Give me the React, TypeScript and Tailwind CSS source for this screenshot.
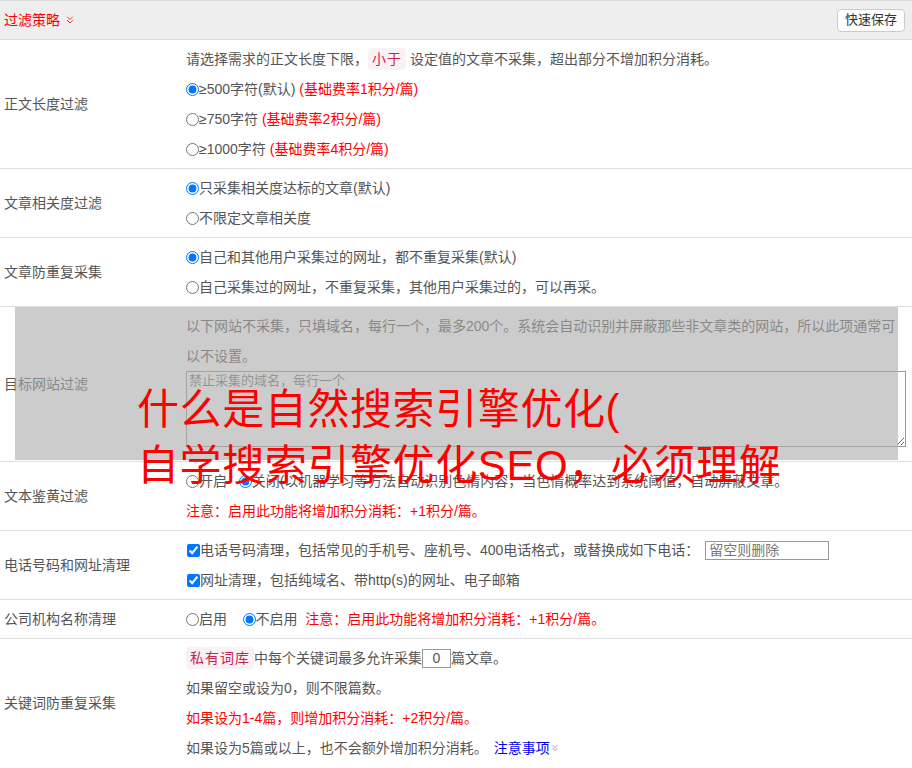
import { ChevronsDown } from 'lucide-react';
import type { ReactNode } from 'react';

function Row({ label, children, last }: { label: string; children: ReactNode; last?: boolean }) {
  return (
    <div className={`flex ${last ? '' : 'border-b border-[#dddddd]'}`}>
      <div className="flex w-[186px] shrink-0 items-center pl-[4px]">{label}</div>
      <div className="flex-1 py-[4px]">{children}</div>
    </div>
  );
}

function Line({ children }: { children: ReactNode }) {
  return <div className="flex h-[30px] items-center whitespace-nowrap">{children}</div>;
}

function Radio({ checked, name }: { checked?: boolean; name: string }) {
  return <input type="radio" name={name} defaultChecked={checked} className="m-0 h-[13px] w-[13px]" />;
}

function Check() {
  return <input type="checkbox" defaultChecked className="m-0 ml-[1px] h-[13px] w-[13px]" />;
}

function Code({ children }: { children: ReactNode }) {
  return (
    <span className="rounded-[4px] bg-[#f9f2f4] px-[4px] leading-[22px] text-[#c7254e] tracking-[1px]">
      {children}
    </span>
  );
}

const red = 'text-[#ff0000]';

export default function App() {
  return (
    <div className="relative w-[912px] bg-white font-['Liberation_Sans','Noto_Sans_CJK_SC',sans-serif] text-[14px] text-[#555555]">
      {/* header */}
      <div className="flex h-[40px] items-center justify-between border-y border-[#dddddd] bg-[#eeeeee] pl-[4px] pr-[7px]">
        <div className="flex items-center gap-[4px] text-[#ff0000]">
          过滤策略
          <ChevronsDown className="h-[12px] w-[12px]" strokeWidth={1.6} />
        </div>
        <button className="h-[23px] w-[68px] rounded-[4px] border border-[#cccccc] bg-white text-[13px] text-[#333333]">
          快速保存
        </button>
      </div>

      <Row label="正文长度过滤">
        <Line>
          请选择需求的正文长度下限，
          <Code>小于</Code>
          &nbsp;设定值的文章不采集，超出部分不增加积分消耗。
        </Line>
        <Line>
          <Radio name="len" checked />
          ≥500字符(默认)&nbsp;<span className={red}>(基础费率1积分/篇)</span>
        </Line>
        <Line>
          <Radio name="len" />
          ≥750字符&nbsp;<span className={red}>(基础费率2积分/篇)</span>
        </Line>
        <Line>
          <Radio name="len" />
          ≥1000字符&nbsp;<span className={red}>(基础费率4积分/篇)</span>
        </Line>
      </Row>

      <Row label="文章相关度过滤">
        <Line>
          <Radio name="rel" checked />
          只采集相关度达标的文章(默认)
        </Line>
        <Line>
          <Radio name="rel" />
          不限定文章相关度
        </Line>
      </Row>

      <Row label="文章防重复采集">
        <Line>
          <Radio name="dup" checked />
          自己和其他用户采集过的网址，都不重复采集(默认)
        </Line>
        <Line>
          <Radio name="dup" />
          自己采集过的网址，不重复采集，其他用户采集过的，可以再采。
        </Line>
      </Row>

      {/* target site row, dimmed by a translucent layer */}
      <div className="relative">
        <Row label="目标网站过滤">
          <div className="w-[710px] whitespace-normal leading-[30px]">
            以下网站不采集，只填域名，每行一个，最多200个。系统会自动识别并屏蔽那些非文章类的网站，所以此项通常可以不设置。
          </div>
          <textarea
            placeholder="禁止采集的域名，每行一个"
            className="mb-[10px] block h-[76px] w-[720px] border border-[#999999] bg-white px-[2px] py-[1px] text-[13px] leading-[16px] placeholder:text-[#757575]"
          />
        </Row>
        <div className="pointer-events-none absolute bottom-[2px] left-[15px] top-0 w-[883px] bg-[rgba(170,170,170,0.6)]" />
      </div>

      <Row label="文本鉴黄过滤">
        <Line>
          <Radio name="porn" />
          开启&nbsp;&nbsp;&nbsp;
          <Radio name="porn" checked />
          关闭(以机器学习等方法自动识别色情内容，当色情概率达到系统阈值，自动屏蔽文章。
        </Line>
        <Line>
          <span className={red}>注意：启用此功能将增加积分消耗：+1积分/篇。</span>
        </Line>
      </Row>

      <Row label="电话号码和网址清理">
        <Line>
          <Check />
          电话号码清理，包括常见的手机号、座机号、400电话格式，或替换成如下电话：
          <input
            placeholder="留空则删除"
            className="ml-[6px] h-[19px] w-[124px] border border-[#999999] px-[3px] text-[14px] placeholder:text-[#777777]"
          />
        </Line>
        <Line>
          <Check />
          网址清理，包括纯域名、带http(s)的网址、电子邮箱
        </Line>
      </Row>

      <Row label="公司机构名称清理">
        <Line>
          <Radio name="org" />
          启用&nbsp;&nbsp;&nbsp;&nbsp;
          <Radio name="org" checked />
          不启用&nbsp;&nbsp;<span className={red}>注意：启用此功能将增加积分消耗：+1积分/篇。</span>
        </Line>
      </Row>

      <Row label="关键词防重复采集" last>
        <Line>
          <Code>私有词库</Code>
          中每个关键词最多允许采集
          <input
            defaultValue="0"
            className="h-[19px] w-[29px] border border-[#999999] text-center text-[14px] text-[#555555]"
          />
          篇文章。
        </Line>
        <Line>如果留空或设为0，则不限篇数。</Line>
        <Line>
          <span className={red}>如果设为1-4篇，则增加积分消耗：+2积分/篇。</span>
        </Line>
        <Line>
          如果设为5篇或以上，也不会额外增加积分消耗。
          <span className="ml-[6px] flex items-center text-[#0000ee]">
            注意事项
            <ChevronsDown className="h-[10px] w-[10px] text-[#5555ff]" strokeWidth={1.6} />
          </span>
        </Line>
      </Row>

      {/* red headline laid over the page */}
      <div className="pointer-events-none absolute left-[137px] top-[382px] whitespace-nowrap text-[42px] leading-[56px] tracking-[0.6px] text-[#ff0000]">
        <div>什么是自然搜索引擎优化(</div>
        <div>自学搜索引擎优化SEO，必须理解</div>
      </div>
    </div>
  );
}
